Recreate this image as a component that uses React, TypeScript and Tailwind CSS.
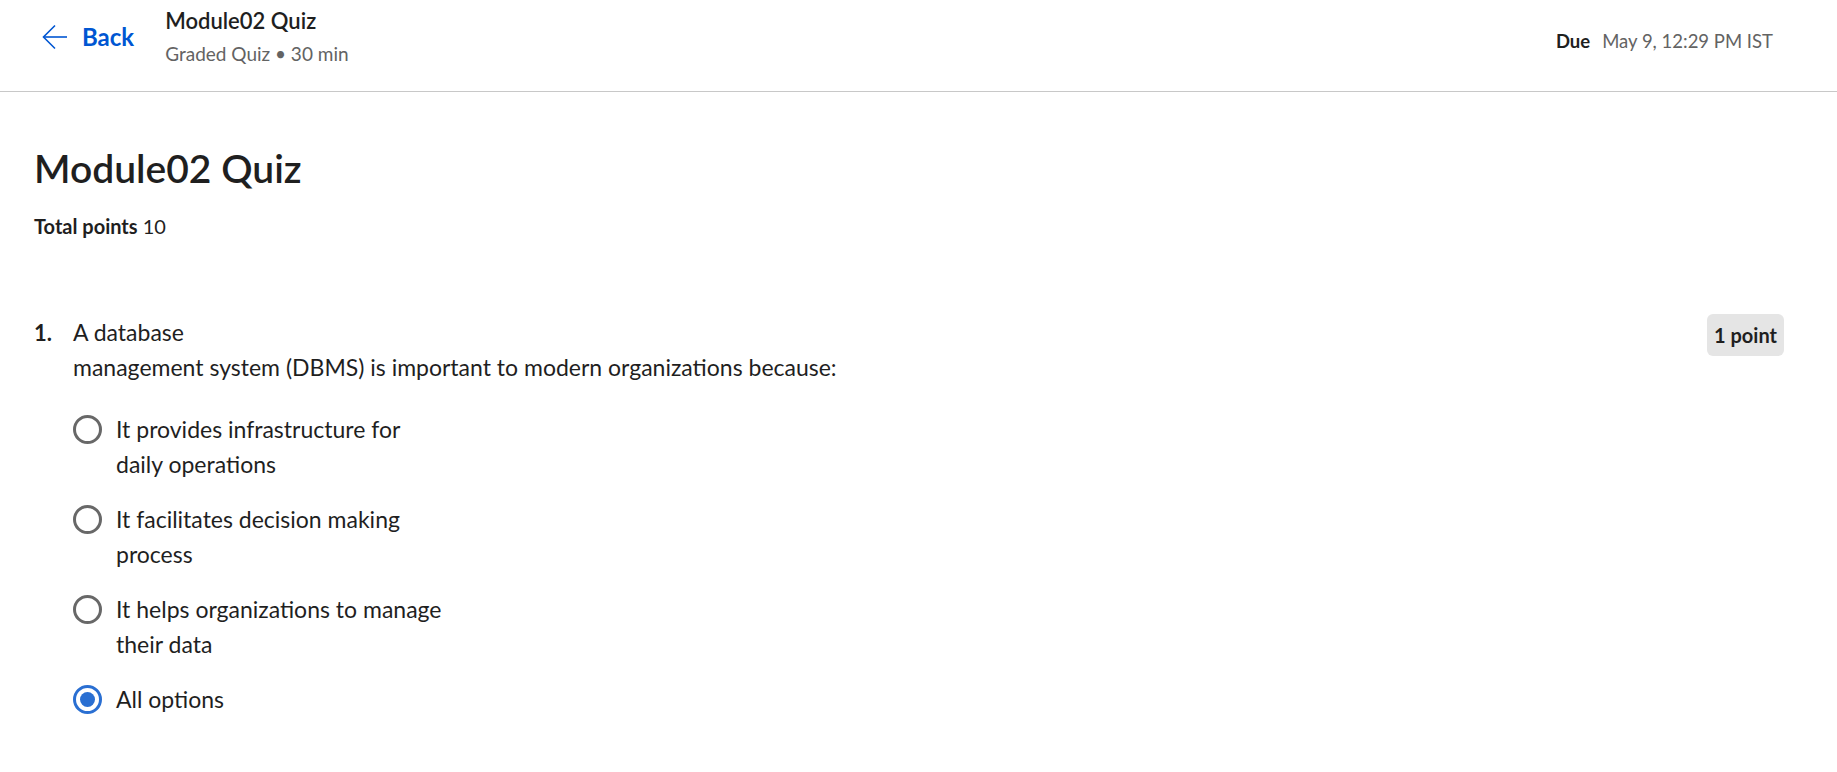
import React from 'react';

const font = { fontFamily: 'Lato, "Noto Sans", sans-serif' };

const options = [
  { lines: ['It provides infrastructure for', 'daily operations'], checked: false },
  { lines: ['It facilitates decision making', 'process'], checked: false },
  { lines: ['It helps organizations to manage', 'their data'], checked: false },
  { lines: ['All options'], checked: true },
];

function BackArrow() {
  return (
    <svg width="26" height="26" viewBox="0 0 26 26" fill="none" stroke="#0056d2" strokeWidth="1.6">
      <path d="M25 13H2" />
      <path d="M13 1.5 1.5 13 13 24.5" />
    </svg>
  );
}

function Radio({ checked }: { checked: boolean }) {
  if (checked) {
    return (
      <span className="flex h-[29px] w-[29px] shrink-0 items-center justify-center rounded-full border-[3px] border-[#2a6fd2]">
        <span className="h-[15px] w-[15px] rounded-full bg-[#2a6fd2]" />
      </span>
    );
  }
  return <span className="block h-[29px] w-[29px] shrink-0 rounded-full border-[3px] border-[#686868]" />;
}

function Header() {
  return (
    <header className="flex h-[92px] items-start justify-between border-b border-[#c8c8c8] bg-white">
      <div className="flex items-start">
        <button className="ml-[42px] mt-[23px] flex items-center gap-[14px] text-[24px] font-bold text-[#0056d2]">
          <BackArrow />
          <span className="leading-[28px]">Back</span>
        </button>
        <div className="ml-[31px] mt-[6px]">
          <div className="text-[22px] font-semibold leading-[30px] text-[#1f1f1f]">Module02 Quiz</div>
          <div className="mt-[4px] text-[19px] leading-[28px] text-[#636363]">Graded Quiz • 30 min</div>
        </div>
      </div>
      <div className="mr-[64px] mt-[27px] flex items-baseline text-[18.5px] leading-[28px]">
        <span className="font-bold text-[#1f1f1f]">Due</span>
        <span className="ml-[12px] text-[#636363]">May 9, 12:29 PM IST</span>
      </div>
    </header>
  );
}

function Question() {
  return (
    <div className="mt-[75px] flex items-start justify-between">
      <div className="flex items-start">
        <div className="w-[39px] text-[22px] font-bold leading-[35px] text-[#1f1f1f]">1.</div>
        <div>
          <div className="text-[23px] leading-[35px] text-[#1f1f1f]">
            <div>A database</div>
            <div>management system (DBMS) is important to modern organizations because:</div>
          </div>
          <div className="mt-[27px] flex flex-col gap-[20px]">
            {options.map((o, i) => (
              <label key={i} className="flex items-start gap-[14px]">
                <span className="mt-[3px]">
                  <Radio checked={o.checked} />
                </span>
                <span className="text-[23px] leading-[35px] text-[#1f1f1f]">
                  {o.lines.map((l, j) => (
                    <span key={j} className="block">{l}</span>
                  ))}
                </span>
              </label>
            ))}
          </div>
        </div>
      </div>
      <span className="mt-[-1px] rounded-[6px] bg-[#e5e5e5] px-[7px] text-[20px] font-bold leading-[42px] text-[#1f1f1f]">
        1 point
      </span>
    </div>
  );
}

export default function App() {
  return (
    <div className="min-h-screen bg-white" style={font}>
      <Header />
      <main className="pl-[34px] pr-[53px]">
        <h1 className="mt-[50px] text-[39px] font-semibold leading-[52px] text-[#1f1f1f]">Module02 Quiz</h1>
        <div className="mt-[18px] text-[20px] leading-[28px] text-[#1f1f1f]">
          <span className="font-bold">Total points</span> 10
        </div>
        <Question />
      </main>
    </div>
  );
}
